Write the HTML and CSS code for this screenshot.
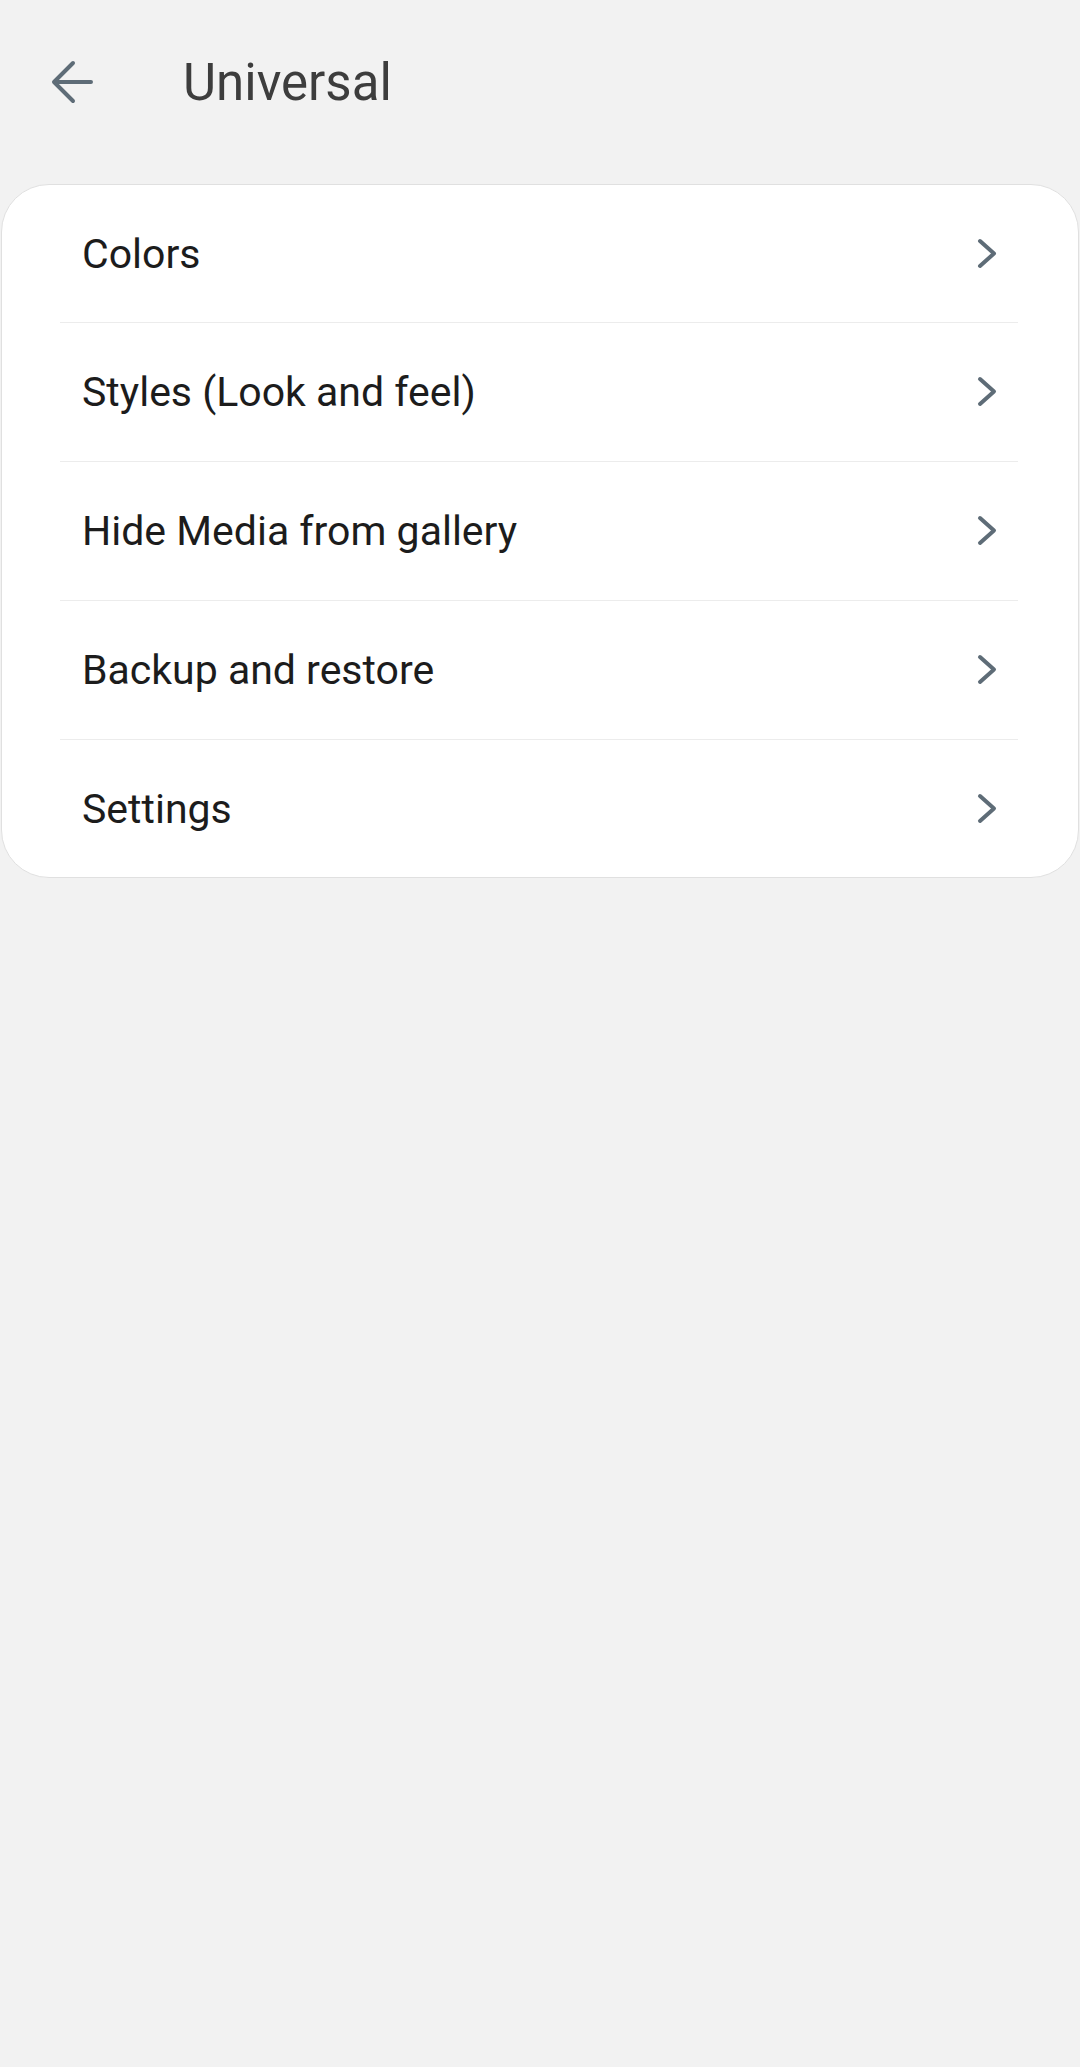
FILE: index.html
```html
<!DOCTYPE html>
<html lang="en">
<head>
  <meta charset="UTF-8" />
  <meta name="viewport" content="width=device-width, initial-scale=1.0"/>
  <title>Universal</title>
  <link rel="stylesheet" href="styles.css">
</head>
<body>
  <div class="topbar">
    <svg class="atras" width="44" height="44" viewBox="0 0 44 44">
      <path d="M40 22 H4 M22 3 L3 22 L22 41" fill="none" stroke="#5e6c77" stroke-width="4" stroke-linecap="round" stroke-linejoin="round"/>
    </svg>
    <h1>Universal</h1>
  </div>

  <div class="tarjeta">
    <div class="fila"><span>Colors</span><svg class="flecha" width="24" height="34" viewBox="0 0 24 34"><path d="M4 4 L18 16.5 L4 29" fill="none" stroke="#5e6c77" stroke-width="4" stroke-linecap="round" stroke-linejoin="round"/></svg></div>
    <div class="fila"><span>Styles (Look and feel)</span><svg class="flecha" width="24" height="34" viewBox="0 0 24 34"><path d="M4 4 L18 16.5 L4 29" fill="none" stroke="#5e6c77" stroke-width="4" stroke-linecap="round" stroke-linejoin="round"/></svg></div>
    <div class="fila"><span>Hide Media from gallery</span><svg class="flecha" width="24" height="34" viewBox="0 0 24 34"><path d="M4 4 L18 16.5 L4 29" fill="none" stroke="#5e6c77" stroke-width="4" stroke-linecap="round" stroke-linejoin="round"/></svg></div>
    <div class="fila"><span>Backup and restore</span><svg class="flecha" width="24" height="34" viewBox="0 0 24 34"><path d="M4 4 L18 16.5 L4 29" fill="none" stroke="#5e6c77" stroke-width="4" stroke-linecap="round" stroke-linejoin="round"/></svg></div>
    <div class="fila"><span>Settings</span><svg class="flecha" width="24" height="34" viewBox="0 0 24 34"><path d="M4 4 L18 16.5 L4 29" fill="none" stroke="#5e6c77" stroke-width="4" stroke-linecap="round" stroke-linejoin="round"/></svg></div>
  </div>
</body>
</html>
```

FILE: styles.css
```css
* { box-sizing: border-box; margin: 0; padding: 0; }
body {
  font-family: Roboto, 'Noto Sans', sans-serif;
  background: #f2f2f2;
  min-height: 100vh;
}
.topbar {
  display: flex; align-items: center;
  height: 164px; padding-left: 51px; gap: 88px;
}
.topbar h1 {
  font-size: 51px; font-weight: 400; color: #3d3d3d;
}
.tarjeta {
  margin: 20px 1px 0; background: #fff;
  border: 1px solid #e0e0e0; border-radius: 48px;
}
.fila {
  display: flex; align-items: center; justify-content: space-between;
  height: 139px; margin: 0 60px 0 58px; padding: 0 18px 0 22px;
  border-bottom: 1px solid #ececec;
  font-size: 41px; color: #1c1c1c;
}
.fila:first-child { height: 138px; }
.fila:last-child { border-bottom: none; height: 137px; }
.flecha { display: block; }
```
